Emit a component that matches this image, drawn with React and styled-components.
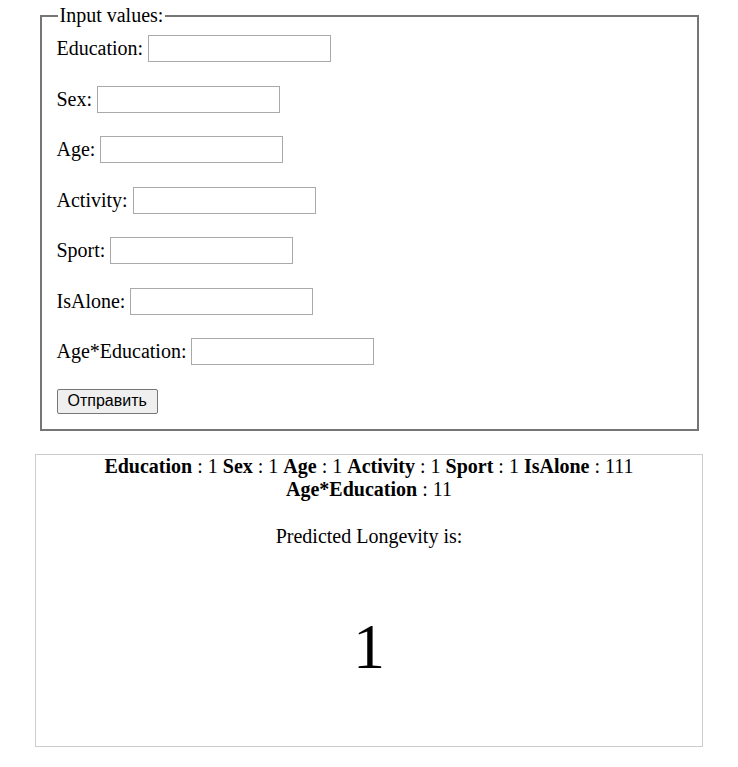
import React, { useState } from 'react';
import styled, { createGlobalStyle } from 'styled-components';

const GlobalStyle = createGlobalStyle`
  body {
    margin: 0;
    background: #fff;
    font-family: "Liberation Serif", "Times New Roman", serif;
    font-size: 20px;
    color: #000;
  }
`;

const Page = styled.div`
  display: flex;
  flex-direction: column;
  align-items: center;
  padding-top: 4px;
`;

const Fieldset = styled.fieldset`
  box-sizing: border-box;
  width: 659px;
  margin: 0;
  padding: 8px 15px 15px;
  border: 2px solid #767676;
`;

const Legend = styled.legend`
  padding: 0 2px;
  margin-left: 1px;
  line-height: 23px;
`;

const Fields = styled.div`
  display: flex;
  flex-direction: column;
  gap: 23.5px;
`;

const Row = styled.label`
  display: flex;
  align-items: center;
  gap: 5px;
  height: 27px;
`;

const Input = styled.input`
  box-sizing: border-box;
  width: 183px;
  height: 27px;
  border: 1px solid #a9a9a9;
  padding: 1px 3px;
  font-size: 16px;
  outline: none;
`;

const Button = styled.button`
  align-self: flex-start;
  box-sizing: border-box;
  height: 25px;
  padding: 0 10px;
  font-family: "Liberation Sans", Arial, sans-serif;
  font-size: 16px;
  color: #000;
  background: #efefef;
  border: 1px solid #767676;
  border-radius: 2px;
`;

const Result = styled.div`
  box-sizing: border-box;
  width: 668px;
  margin-top: 23px;
  border: 1px solid #cccccc;
  text-align: center;
  line-height: 23px;
`;

const Summary = styled.div`
  padding: 0 60px;
`;

const Caption = styled.p`
  margin: 24px 0 0;
`;

const BigValue = styled.div`
  font-size: 64px;
  line-height: 74px;
  margin: 62px 0 62px;
`;

const fields = ['Education', 'Sex', 'Age', 'Activity', 'Sport', 'IsAlone', 'Age*Education'];
const values = { Education: '1', Sex: '1', Age: '1', Activity: '1', Sport: '1', IsAlone: '111', 'Age*Education': '11' };

export default function App() {
  const [form, setForm] = useState({});

  return (
    <Page>
      <GlobalStyle />
      <Fieldset>
        <Legend>Input values:</Legend>
        <Fields>
          {fields.map((name) => (
            <Row key={name}>
              {name}:
              <Input
                type='text'
                value={form[name] || ''}
                onChange={(e) => setForm({ ...form, [name]: e.target.value })}
              />
            </Row>
          ))}
          <Button type='button'>Отправить</Button>
        </Fields>
      </Fieldset>
      <Result>
        <Summary>
          {fields.map((name) => (
            <React.Fragment key={name}>
              <b>{name}</b> : {values[name]}{' '}
            </React.Fragment>
          ))}
        </Summary>
        <Caption>Predicted Longevity is:</Caption>
        <BigValue>1</BigValue>
      </Result>
    </Page>
  );
}
